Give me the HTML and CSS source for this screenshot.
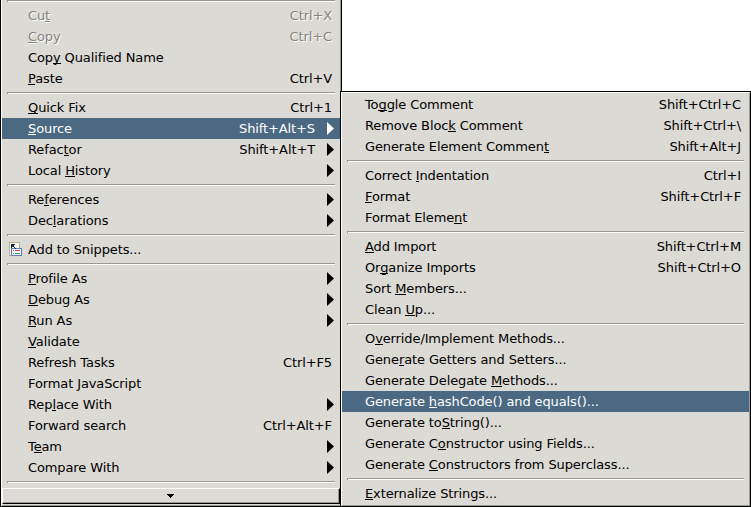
FILE: index.html
```html
<!DOCTYPE html>
<html lang="en">
<head>
<meta charset="utf-8">
<title>Source menu</title>
<link rel="stylesheet" href="styles.css">
</head>
<body>
<main class="screen">
<div class="menu main">
<hr>
<div class="item off"><span>Cu<u>t</u></span><kbd>Ctrl+X</kbd></div>
<div class="item off"><span><u>C</u>opy</span><kbd>Ctrl+C</kbd></div>
<div class="item"><span>Cop<u>y</u> Qualified Name</span></div>
<div class="item"><span><u>P</u>aste</span><kbd>Ctrl+V</kbd></div>
<hr>
<div class="item"><span><u>Q</u>uick Fix</span><kbd>Ctrl+1</kbd></div>
<div class="item sub on"><span><u>S</u>ource</span><kbd>Shift+Alt+S</kbd></div>
<div class="item sub"><span>Refac<u>t</u>or</span><kbd>Shift+Alt+T</kbd></div>
<div class="item sub"><span>Local <u>H</u>istory</span></div>
<hr>
<div class="item sub"><span>Re<u>f</u>erences</span></div>
<div class="item sub"><span>Dec<u>l</u>arations</span></div>
<hr>
<div class="item"><svg class="icon" width="13" height="14" viewBox="0 0 13 14" shape-rendering="crispEdges"><path fill="#b9b28a" d="M0 0h11v14H0z"/><path fill="#f7f7f2" d="M1 1h9v12H1z"/><path fill="#5580b5" d="M2 6h11v8H2z"/><path fill="#f4f8fc" d="M3 7h9v6H3z"/><path fill="#15233f" d="M2 2h4v1H2zM2 3h3v1H2zM2 4h2v1H2zM4 4h1v1H4zM2 5h1v1H2zM5 5h1v1H5zM6 6h1v1H6z"/><path fill="#d8403c" d="M4 8h1v1H4zM6 8h5v1H6z"/><path fill="#3ba05c" d="M4 11h1v1H4zM6 11h5v1H6z"/></svg><span>Add to Snippets...</span></div>
<hr>
<div class="item sub"><span><u>P</u>rofile As</span></div>
<div class="item sub"><span><u>D</u>ebug As</span></div>
<div class="item sub"><span><u>R</u>un As</span></div>
<div class="item"><span><u>V</u>alidate</span></div>
<div class="item"><span>Refresh Tasks</span><kbd>Ctrl+F5</kbd></div>
<div class="item"><span>Format JavaScript</span></div>
<div class="item sub"><span>Rep<u>l</u>ace With</span></div>
<div class="item"><span>Forward search</span><kbd>Ctrl+Alt+F</kbd></div>
<div class="item sub"><span>T<u>e</u>am</span></div>
<div class="item sub"><span>Compare With</span></div>
<hr>
<div class="scroll"><svg width="7" height="4" viewBox="0 0 7 4" shape-rendering="crispEdges"><path d="M0 0h7v1H6v1H5v1H4v1H3V3H2V2H1V1H0z"/></svg></div>
</div>
<div class="menu side">
<div class="item"><span>To<u>g</u>gle Comment</span><kbd>Shift+Ctrl+C</kbd></div>
<div class="item"><span>Remove Bloc<u>k</u> Comment</span><kbd>Shift+Ctrl+\</kbd></div>
<div class="item"><span>Generate Element Commen<u>t</u></span><kbd>Shift+Alt+J</kbd></div>
<hr>
<div class="item"><span>Correct <u>I</u>ndentation</span><kbd>Ctrl+I</kbd></div>
<div class="item"><span><u>F</u>ormat</span><kbd>Shift+Ctrl+F</kbd></div>
<div class="item"><span>Format Eleme<u>n</u>t</span></div>
<hr>
<div class="item"><span><u>A</u>dd Import</span><kbd>Shift+Ctrl+M</kbd></div>
<div class="item"><span>Or<u>g</u>anize Imports</span><kbd>Shift+Ctrl+O</kbd></div>
<div class="item"><span>Sort <u>M</u>embers...</span></div>
<div class="item"><span>Clean <u>U</u>p...</span></div>
<hr>
<div class="item"><span>O<u>v</u>erride/Implement Methods...</span></div>
<div class="item"><span>Gene<u>r</u>ate Getters and Setters...</span></div>
<div class="item"><span>Generate Delegate <u>M</u>ethods...</span></div>
<div class="item on"><span>Generate <u>h</u>ashCode() and equals()...</span></div>
<div class="item"><span>Generate to<u>S</u>tring()...</span></div>
<div class="item"><span>Generate C<u>o</u>nstructor using Fields...</span></div>
<div class="item"><span>Generate <u>C</u>onstructors from Superclass...</span></div>
<hr>
<div class="item"><span><u>E</u>xternalize Strings...</span></div>
</div>
</main>
</body>
</html>
```
FILE: styles.css
```css
* { box-sizing: border-box; }
body { margin: 0; background: #fff; overflow: hidden; }
.screen {
  display: flex;
  align-items: flex-start;
  width: 751px;
  height: 507px;
  overflow: hidden;
  font: 13px/21px "DejaVu Sans", sans-serif;
  letter-spacing: -0.11px;
  color: #000;
}
.menu { background: #dcdad5; border: 1px solid #000; flex: none; }
.main {
  width: 342px;
  height: 510px;
  margin-top: -3px;
  border-top: 0;
  padding: 0 1px;
  box-shadow: inset 1px 0 #fff, inset -1px -1px #9b9892;
}
.side {
  width: 411px;
  height: 416px;
  margin: 91px 0 0 -2px;
  padding: 2px 1px 0;
  position: relative;
  box-shadow: inset 1px 1px #fff, inset -1px -1px #9b9892;
}
.item {
  display: flex;
  position: relative;
  height: 21px;
  padding: 0 8px 0 26px;
  white-space: pre;
}
.side .item { padding: 0 8px 0 23px; }
.item kbd { font: inherit; margin-left: auto; }
.item u {
  text-decoration: none;
  background: linear-gradient(currentColor, currentColor) 0 calc(100% - 1px) / 100% 1px no-repeat;
}
.main .sub { padding-right: 25px; }
.sub::after {
  content: "";
  position: absolute;
  right: 6px;
  top: 4px;
  width: 7px;
  height: 13px;
  background: currentColor;
  clip-path: polygon(0 0, 100% 50%, 0 100%);
}
.on { background: #4b6983; color: #fff; }
.off { color: #86847f; text-shadow: 1px 1px #fff; }
.off u { box-shadow: inset 0 -1px #fff; }
hr {
  height: 2px;
  margin: 3px 5px;
  border: 0;
  border-top: 1px solid #9b9892;
  border-left: 1px solid #9b9892;
  background: #fff;
}
.icon { position: absolute; left: 7px; top: 3px; }
.scroll {
  display: flex;
  align-items: center;
  justify-content: center;
  height: 16px;
  margin-top: 5px;
  padding-right: 2px;
  border: 1px solid #fff;
  border-right-color: #000;
  border-bottom-color: #000;
  box-shadow: inset -1px -1px #9b9892;
}
```
